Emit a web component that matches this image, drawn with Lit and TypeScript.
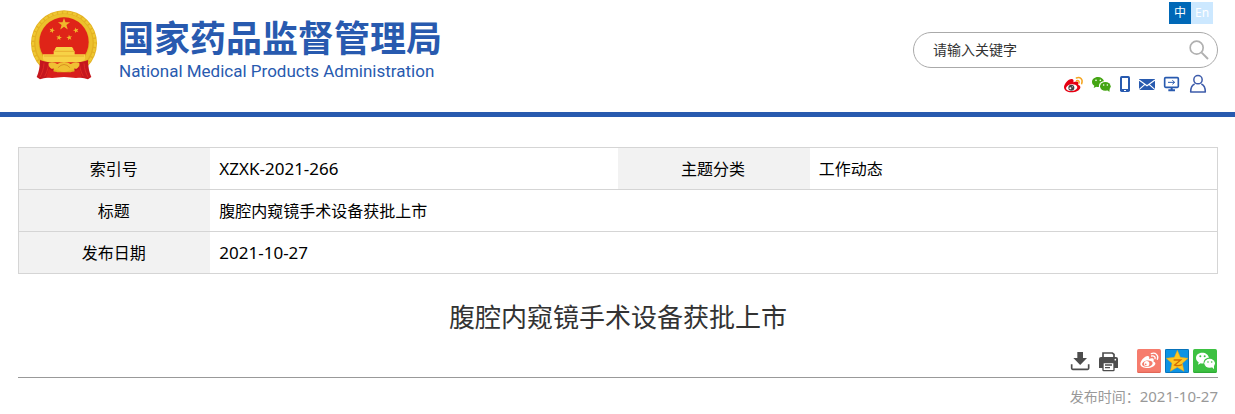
import { LitElement, html, svg, css } from "lit";
import { customElement, property } from "lit/decorators.js";

const star = (cx: number, cy: number, r: number, turn = 0) => {
  const points: string[] = [];
  for (let i = 0; i < 10; i++) {
    const radius = i % 2 ? r * 0.4 : r;
    const a = ((-90 + turn + i * 36) * Math.PI) / 180;
    points.push(`${(cx + radius * Math.cos(a)).toFixed(1)},${(cy + radius * Math.sin(a)).toFixed(1)}`);
  }
  return points.join(" ");
};

const glyphs: Record<string, { box: string; width: number; height: number; art: unknown }> = {
  search: {
    box: "0 0 66 66", width: 22, height: 22,
    art: svg`<circle cx="26" cy="26" r="19.5" fill="none" stroke="#b0b0b0" stroke-width="5"/>
      <path d="M41 41L60 60" stroke="#b0b0b0" stroke-width="6"/>`,
  },
  weibo: {
    box: "24 24 63 60", width: 21, height: 20,
    art: svg`<path d="M27 64C27 54 40 38 51 39C57 40 56 46 55 49C61 46 69 45 70 50C71 53 69 55 70 57C74 58 77 61 76 65C74 73 62 79 49 79C37 79 27 73 27 64Z" fill="#e60012"/>
      <ellipse cx="50" cy="65" rx="17" ry="10" fill="#fff" transform="rotate(-8 50 65)"/>
      <circle cx="49" cy="65" r="9" fill="#444"/><circle cx="46" cy="67" r="3" fill="#fff"/><circle cx="52" cy="62" r="1.500" fill="#fff"/>
      <path d="M64 36C75 31 85 40 80 53M65 44C70 42 74 46 72 51" fill="none" stroke="#f5a623" stroke-width="4.500" stroke-linecap="round"/>`,
  },
  wechat: {
    box: "108 24 63 60", width: 21, height: 20,
    art: svg`<path d="M129 33C118 33 111 40 111 48C111 53 114 57 118 59L116 66L124 62C126 63 130 63 132 62C131 53 138 46 147 46C145 38 138 33 129 33Z" fill="#44a513"/>
      <ellipse cx="151" cy="61" rx="16" ry="13" fill="#44a513"/><path d="M156 71L163 78L164 68Z" fill="#44a513"/>
      <g fill="#fff"><circle cx="123" cy="43" r="2.500"/><circle cx="136" cy="43" r="2.500"/><circle cx="146" cy="57" r="2.300"/><circle cx="157" cy="57" r="2.300"/></g>`,
  },
  phone: {
    box: "192 24 36 60", width: 12, height: 20,
    art: svg`<rect x="195" y="30" width="30" height="48" rx="5" fill="#285aaf"/><rect x="201" y="36" width="18" height="33" fill="#fff"/><rect x="207" y="72" width="6" height="3" fill="#fff"/>`,
  },
  mail: {
    box: "249 24 54 60", width: 18, height: 20,
    art: svg`<rect x="252" y="39" width="48" height="33" fill="#285aaf"/>
      <path d="M252 42L276 59L300 42M252 71L269 56M300 71L283 56" fill="none" stroke="#fff" stroke-width="3.500"/>`,
  },
  monitor: {
    box: "324 24 51 60", width: 17, height: 20,
    art: svg`<rect x="329" y="35" width="41" height="29" rx="3" fill="none" stroke="#285aaf" stroke-width="5"/>
      <path d="M350 63V72M340 73H360" stroke="#285aaf" stroke-width="6"/>
      <path d="M339 49H358M352 43L359 49L352 55" fill="none" stroke="#285aaf" stroke-width="3"/>`,
  },
  user: {
    box: "396 24 66 60", width: 22, height: 20,
    art: svg`<circle cx="429" cy="41" r="12.500" fill="none" stroke="#3e5cab" stroke-width="4.500"/>
      <path d="M419 54C411 57 407 65 407 78H451C451 65 447 57 439 54" fill="none" stroke="#3e5cab" stroke-width="4.500" stroke-linejoin="round"/>`,
  },
  download: {
    box: "39 27 72 72", width: 24, height: 24,
    art: svg`<path d="M67 36H84V54H96L75.500 75L55 54H67Z" fill="#4d4d4d"/>
      <path d="M50 73V85Q50 88 53 88H98Q101 88 101 85V73" fill="none" stroke="#4d4d4d" stroke-width="5"/>`,
  },
  print: {
    box: "123 27 72 72", width: 24, height: 24,
    art: svg`<path d="M144 52V39H172L177 43V52" fill="#fff" stroke="#4d4d4d" stroke-width="5"/>
      <path d="M138 51H183Q189 51 189 57V84H132V57Q132 51 138 51Z" fill="#4d4d4d"/>
      <circle cx="181" cy="59" r="2.500" fill="#fff"/>
      <rect x="144" y="68" width="33" height="24" rx="2" fill="#fff" stroke="#4d4d4d" stroke-width="4"/>
      <path d="M150 75H171M150 83H165" stroke="#4d4d4d" stroke-width="4"/>`,
  },
  shareWeibo: {
    box: "246 27 72 72", width: 24, height: 24,
    art: svg`<rect x="246" y="27" width="72" height="72" rx="5" fill="#f67c6d"/><path d="M248 97H316" stroke="#de6355" stroke-width="3"/>
      <path d="M256 72C256 62 270 47 279 48C284 49 283 53 282 57C288 54 295 54 296 58C297 61 295 63 296 65C300 66 302 69 301 72C299 79 289 84 278 84C266 84 256 80 256 72Z" fill="#fff"/>
      <ellipse cx="277" cy="71" rx="16" ry="9.500" fill="#f67c6d" transform="rotate(-7 277 71)"/>
      <circle cx="275" cy="71" r="8" fill="#fff"/><circle cx="272" cy="73" r="2.800" fill="#f67c6d"/>
      <path d="M289 41C301 36 312 46 307 58M290 48C297 46 302 51 300 56" fill="none" stroke="#fff" stroke-width="4" stroke-linecap="round"/>`,
  },
  shareQzone: {
    box: "330 27 72 72", width: 24, height: 24,
    art: svg`<rect x="330" y="27" width="72" height="72" rx="4" fill="#0d93e4"/><rect x="331.500" y="28.500" width="69" height="69" rx="3" fill="none" stroke="#0872b9" stroke-width="3"/>
      <path d="M367 31L376 52L399 55L382 70L387 94L367 82L346 94L351 70L334 55L358 52Z" fill="#fdc823" stroke="#e8a316" stroke-width="1.500" stroke-linejoin="round"/>
      <path d="M356 60H377L359 75Q370 79 381 74" fill="none" stroke="#d66c00" stroke-width="4"/>`,
  },
  shareWechat: {
    box: "414 27 72 72", width: 24, height: 24,
    art: svg`<rect x="414" y="27" width="72" height="72" rx="5" fill="#3dc142"/><path d="M416 97H484" stroke="#2ca534" stroke-width="3"/>
      <path d="M442 38C430 38 423 45 423 54C423 60 427 64 431 67L429 74L437 70C440 71 444 71 446 70C445 60 452 53 462 53C460 44 452 38 442 38Z" fill="#fff"/>
      <ellipse cx="464" cy="70" rx="16" ry="13.500" fill="#fff"/><path d="M470 80L477 88L477 77Z" fill="#fff"/>
      <g fill="#3dc142"><circle cx="436" cy="49" r="3"/><circle cx="449" cy="49" r="3"/><circle cx="459" cy="66" r="2.500"/><circle cx="470" cy="66" r="2.500"/></g>`,
  },
  emblem: {
    box: "30 30 204 216", width: 68, height: 72,
    art: svg`<circle cx="132" cy="130" r="99" fill="#e3b022"/>
      <circle cx="132" cy="130" r="93" fill="none" stroke="#efc832" stroke-width="7" stroke-dasharray="11 4"/>
      <circle cx="132" cy="128" r="81" fill="none" stroke="#ecc02c" stroke-width="10"/>
      <circle cx="132" cy="126" r="74" fill="#df2418"/>
      <g fill="#f0b92c"><polygon points=${star(132, 73, 19)}/><polygon points=${star(96, 91, 9, 15)}/><polygon points=${star(168, 91, 9, -15)}/><polygon points=${star(117, 113, 9, 8)}/><polygon points=${star(148, 113, 9, -8)}/></g>
      <path d="M101 154L106 148H104L109 141H156L161 148H159L164 154V163H195V178L185 187H79L69 178V163H101Z" fill="#f7d246"/>
      <path d="M103 154H162M72 168H192" stroke="#e29a22" stroke-width="2"/>
      <path d="M60 180C76 186 91 186 104 190L98 226C88 236 76 232 60 238L50 231C56 219 60 200 60 180Z" fill="#c5161d"/>
      <path d="M204 180C188 186 173 186 160 190L166 226C176 236 188 232 204 238L214 231C208 219 204 200 204 180Z" fill="#c5161d"/>
      <path d="M86 206C102 216 111 217 132 217C153 217 162 216 178 206L185 231C166 237 154 231 132 231C110 231 98 237 79 231Z" fill="#d81e1c"/>
      <path d="M72 190C71 207 66 220 60 231M192 190C193 207 198 220 204 231M86 193C83 209 79 221 74 229M178 193C181 209 185 221 190 229" fill="none" stroke="#e02a24" stroke-width="3"/>
      <path d="M86 189Q99 184 112 192Q121 186 132 186Q143 186 152 192Q165 184 178 189Q180 200 170 206Q158 207 151 201Q152 214 132 216Q112 214 113 201Q106 207 94 206Q84 200 86 189Z" fill="#f0c033"/>
      <path d="M114 203Q132 184 150 203" fill="none" stroke="#d99420" stroke-width="3"/>`,
  },
};

@customElement("nmpa-icon")
export class NmpaIcon extends LitElement {
  static styles = css`
    :host { display: block; }
    .glyph { display: block; }
  `;

  @property() name = "search";

  render() {
    const g = glyphs[this.name];
    return html`<svg class="glyph" viewBox=${g.box} width=${g.width} height=${g.height} aria-hidden="true">${g.art}</svg>`;
  }
}

@customElement("app-root")
export class AppRoot extends LitElement {
  static styles = css`
    :host {
      display: block;
      background: #fff;
      color: #000;
      font-family: "Noto Sans", "Noto Sans CJK SC", sans-serif;
      font-size: 16px;
    }
    * { box-sizing: border-box; }
    a { color: inherit; text-decoration: none; display: block; }
    button { border: 0; padding: 0; background: none; cursor: pointer; font: inherit; display: block; }
    .header {
      display: flex;
      justify-content: space-between;
      height: 117px;
      padding: 0 17px 0 30px;
      border-bottom: 5px solid #285aaf;
    }
    .brand { display: flex; gap: 20px; padding-top: 10px; align-self: flex-start; color: #285aaf; }
    .name { display: block; padding-top: 6px; font: 700 36px/40px "Noto Sans CJK SC", sans-serif; }
    .english { display: block; padding: 3px 0 0 1px; font: 400 17px/24px Roboto, sans-serif; white-space: nowrap; }
    .side { display: flex; flex-direction: column; width: 305px; padding-top: 2px; }
    .langs { display: flex; align-self: flex-end; margin-right: 5px; }
    .lang { width: 22px; height: 22px; line-height: 22px; font-size: 12px; text-align: center; color: #fff; background: #cce8ff; }
    .lang.current { background: #0068b7; }
    .search {
      display: flex;
      align-items: center;
      height: 36px;
      margin-top: 8px;
      padding: 0 7px 0 19px;
      border: 1px solid #aaa;
      border-radius: 18px;
    }
    .query { flex: 1; min-width: 0; height: 20px; border: 0; outline: 0; padding: 0 0 2px; background: none; font: inherit; font-size: 14px; color: #333; }
    .query::placeholder { color: #333; opacity: 1; }
    .links { display: flex; gap: 7px; align-self: flex-end; margin: 6px 9px 0 0; }
    .main { padding: 30px 17px 0 18px; }
    .info { width: 100%; border-collapse: collapse; table-layout: fixed; border: 1px solid #d5d5d5; }
    .info tr { height: 42px; border-bottom: 1px solid #d5d5d5; }
    .info th { width: 16%; padding: 0 2px 0 0; font-weight: 400; text-align: center; background: #f2f2f2; }
    .info td { width: 34%; padding: 0 9px; text-align: left; }
    .info th, .info td { line-height: 24px; }
    .info .code { font-size: 17px; }
    .title { margin: 23px 0 0; font-size: 26px; line-height: 40px; font-weight: 400; text-align: center; color: #333; }
    .tools { display: flex; justify-content: flex-end; gap: 4px; margin-top: 12px; padding: 0 1px 4px 0; border-bottom: 1px solid #999; }
    .share { display: flex; gap: 4px; margin-left: 13px; }
    .date { margin: 7px 0 0; font-size: 14px; line-height: 22px; text-align: right; color: #999; }
    .date time { font-size: 15px; }
  `;

  private links = [
    ["weibo", "微博"], ["wechat", "微信"], ["phone", "手机版"],
    ["mail", "邮箱"], ["monitor", "电脑版"], ["user", "个人中心"],
  ];
  private shares = [["shareWeibo", "分享到微博"], ["shareQzone", "分享到QQ空间"], ["shareWechat", "分享到微信"]];

  render() {
    return html`
      <header class="header">
        <a class="brand" href="#">
          <nmpa-icon name="emblem"></nmpa-icon>
          <span>
            <span class="name">国家药品监督管理局</span>
            <span class="english" lang="en">National Medical Products Administration</span>
          </span>
        </a>
        <div class="side">
          <nav class="langs">
            <a class="lang current" href="#">中</a>
            <a class="lang" href="#">En</a>
          </nav>
          <form class="search" role="search">
            <input class="query" type="text" placeholder="请输入关键字" aria-label="请输入关键字" />
            <button type="button" aria-label="搜索"><nmpa-icon name="search"></nmpa-icon></button>
          </form>
          <nav class="links">
            ${this.links.map(([name, label]) => html`<a href="#" aria-label=${label}><nmpa-icon name=${name}></nmpa-icon></a>`)}
          </nav>
        </div>
      </header>
      <main class="main">
        <table class="info">
          <tbody>
            <tr>
              <th scope="row">索引号</th><td class="code">XZXK-2021-266</td>
              <th scope="row">主题分类</th><td>工作动态</td>
            </tr>
            <tr><th scope="row">标题</th><td colspan="3">腹腔内窥镜手术设备获批上市</td></tr>
            <tr><th scope="row">发布日期</th><td class="code" colspan="3">2021-10-27</td></tr>
          </tbody>
        </table>
        <h1 class="title">腹腔内窥镜手术设备获批上市</h1>
        <div class="tools">
          <button type="button" aria-label="下载"><nmpa-icon name="download"></nmpa-icon></button>
          <button type="button" aria-label="打印"><nmpa-icon name="print"></nmpa-icon></button>
          <div class="share">
            ${this.shares.map(([name, label]) => html`<a href="#" aria-label=${label}><nmpa-icon name=${name}></nmpa-icon></a>`)}
          </div>
        </div>
        <p class="date">发布时间：<time datetime="2021-10-27">2021-10-27</time></p>
      </main>
    `;
  }
}
